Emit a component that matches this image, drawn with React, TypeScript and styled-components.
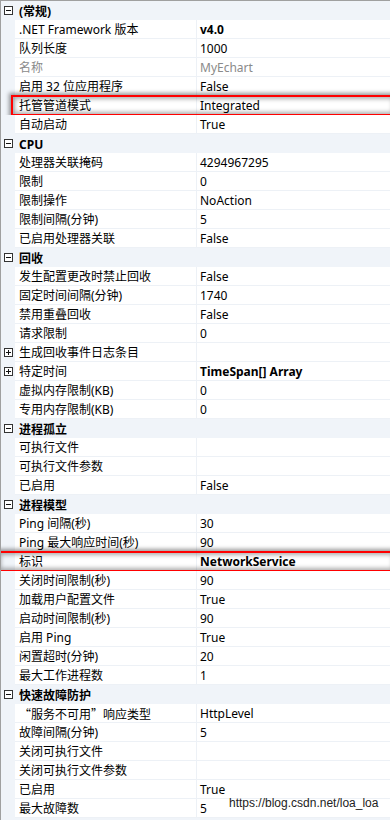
import React from "react";
import styled, { createGlobalStyle } from "styled-components";

const GlobalStyle = createGlobalStyle`
  html, body {
    margin: 0;
    padding: 0;
    background: #ffffff;
    overflow: hidden;
  }
  body {
    font-family: "Noto Sans", "Noto Sans CJK SC", sans-serif;
    font-size: 12px;
    color: #000;
  }
`;

const colors = {
  gutter: "#f0f4f9",
  line: "#edf1f6",
  text: "#000000",
  dim: "#8a8a8a",
  border: "#a0a0a0",
  mark: "#ff0000",
};

interface Prop {
  name: string;
  value?: string;
  bold?: boolean;
  dim?: boolean;
  expand?: boolean;
  cjk?: boolean;
  markFrom?: number;
}

interface Section {
  title: string;
  rows: Prop[];
}

const sections: Section[] = [
  {
    title: "(常规)",
    rows: [
      { name: ".NET Framework 版本", value: "v4.0", bold: true },
      { name: "队列长度", value: "1000" },
      { name: "名称", value: "MyEchart", dim: true },
      { name: "启用 32 位应用程序", value: "False" },
      { name: "托管管道模式", value: "Integrated", markFrom: 10 },
      { name: "自动启动", value: "True" },
    ],
  },
  {
    title: "CPU",
    rows: [
      { name: "处理器关联掩码", value: "4294967295" },
      { name: "限制", value: "0" },
      { name: "限制操作", value: "NoAction" },
      { name: "限制间隔(分钟)", value: "5" },
      { name: "已启用处理器关联", value: "False" },
    ],
  },
  {
    title: "回收",
    rows: [
      { name: "发生配置更改时禁止回收", value: "False" },
      { name: "固定时间间隔(分钟)", value: "1740" },
      { name: "禁用重叠回收", value: "False" },
      { name: "请求限制", value: "0" },
      { name: "生成回收事件日志条目", expand: true },
      { name: "特定时间", value: "TimeSpan[] Array", bold: true, expand: true },
      { name: "虚拟内存限制(KB)", value: "0" },
      { name: "专用内存限制(KB)", value: "0" },
    ],
  },
  {
    title: "进程孤立",
    rows: [
      { name: "可执行文件" },
      { name: "可执行文件参数" },
      { name: "已启用", value: "False" },
    ],
  },
  {
    title: "进程模型",
    rows: [
      { name: "Ping 间隔(秒)", value: "30" },
      { name: "Ping 最大响应时间(秒)", value: "90" },
      { name: "标识", value: "NetworkService", bold: true, markFrom: -4 },
      { name: "关闭时间限制(秒)", value: "90" },
      { name: "加载用户配置文件", value: "True" },
      { name: "启动时间限制(秒)", value: "90" },
      { name: "启用 Ping", value: "True" },
      { name: "闲置超时(分钟)", value: "20" },
      { name: "最大工作进程数", value: "1" },
    ],
  },
  {
    title: "快速故障防护",
    rows: [
      { name: "“服务不可用”响应类型", value: "HttpLevel", cjk: true },
      { name: "故障间隔(分钟)", value: "5" },
      { name: "关闭可执行文件" },
      { name: "关闭可执行文件参数" },
      { name: "已启用", value: "True" },
      { name: "最大故障数", value: "5" },
    ],
  },
];

const Grid = styled.div`
  position: relative;
  width: 390px;
  height: 820px;
  border-top: 1px solid ${colors.border};
  border-left: 1px solid ${colors.border};
  box-sizing: border-box;
  background: ${colors.gutter};
  overflow: hidden;
`;

const Header = styled.div`
  display: grid;
  grid-template-columns: 14px 1fr;
  align-items: center;
  height: 19px;
  background: ${colors.gutter};
  font-weight: 700;
`;

const HeaderTitle = styled.span`
  padding: 2px 0 0 4px;
  line-height: 17px;
`;

const Row = styled.div<{ $markFrom?: number }>`
  position: relative;
  display: grid;
  grid-template-columns: 14px 181px 1fr;
  height: 19px;

  &::after {
    content: "";
    display: ${({ $markFrom }) => ($markFrom === undefined ? "none" : "block")};
    position: absolute;
    left: ${({ $markFrom }) => $markFrom ?? 0}px;
    right: -6px;
    top: -1px;
    bottom: -1px;
    border: 2px solid ${colors.mark};
    box-shadow: 0 0 4px 2px rgba(0, 0, 0, 0.4),
      inset 0 0 4px 2px rgba(0, 0, 0, 0.32);
    pointer-events: none;
  }
`;

const Gutter = styled.div`
  display: flex;
  align-items: center;
  justify-content: center;
  background: ${colors.gutter};
`;

const NameCell = styled.div<{ $dim?: boolean; $cjk?: boolean }>`
  background: #fff;
  border-bottom: 1px solid ${colors.line};
  padding: 2px 0 0 4px;
  line-height: 16px;
  white-space: nowrap;
  overflow: hidden;
  font-family: ${({ $cjk }) =>
    $cjk ? `"Noto Sans CJK SC", sans-serif` : `"Noto Sans", "Noto Sans CJK SC", sans-serif`};
  color: ${({ $dim }) => ($dim ? colors.dim : colors.text)};
`;

const ValueCell = styled.div<{ $bold?: boolean; $dim?: boolean }>`
  background: #fff;
  border-bottom: 1px solid ${colors.line};
  border-left: 1px solid ${colors.line};
  padding: 2px 0 0 3px;
  line-height: 16px;
  white-space: nowrap;
  font-weight: ${({ $bold }) => ($bold ? 700 : 400)};
  color: ${({ $dim }) => ($dim ? colors.dim : colors.text)};
`;

const Watermark = styled.div`
  position: absolute;
  left: 228px;
  bottom: 10px;
  font-family: "Liberation Sans", Arial, sans-serif;
  font-size: 12px;
  color: #222;
  pointer-events: none;
`;

const Toggle = ({ open }: { open: boolean }) => (
  <svg width="9" height="9" viewBox="0 0 9 9">
    <rect x="0.5" y="0.5" width="8" height="8" fill="#fff" stroke="#333" />
    <path d="M2 4.5h5" stroke="#111" />
    {!open && <path d="M4.5 2v5" stroke="#111" />}
  </svg>
);

const App = () => {
  return (
    <>
      <GlobalStyle />
      <Grid>
        {sections.map((section) => (
          <div key={section.title}>
            <Header>
              <Gutter>
                <Toggle open />
              </Gutter>
              <HeaderTitle>{section.title}</HeaderTitle>
            </Header>
            {section.rows.map((row, i) => (
              <Row key={i} $markFrom={row.markFrom}>
                <Gutter>{row.expand && <Toggle open={false} />}</Gutter>
                <NameCell $dim={row.dim} $cjk={row.cjk}>
                  {row.name}
                </NameCell>
                <ValueCell $bold={row.bold} $dim={row.dim}>
                  {row.value}
                </ValueCell>
              </Row>
            ))}
          </div>
        ))}
        <Watermark>https://blog.csdn.net/loa_loa</Watermark>
      </Grid>
    </>
  );
};

export default App;
